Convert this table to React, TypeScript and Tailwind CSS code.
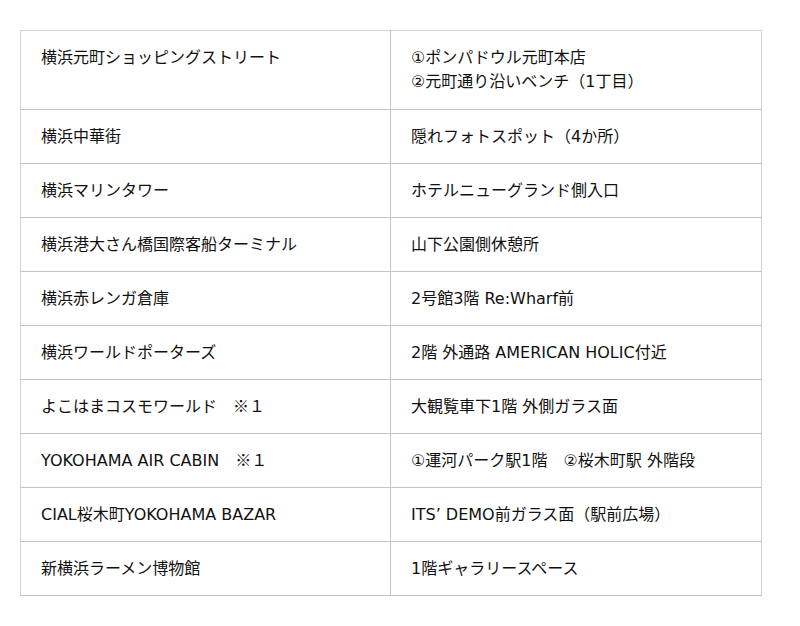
const rows: [string, string[]][] = [
  ["横浜元町ショッピングストリート", ["①ポンパドウル元町本店", "②元町通り沿いベンチ（1丁目）"]],
  ["横浜中華街", ["隠れフォトスポット（4か所）"]],
  ["横浜マリンタワー", ["ホテルニューグランド側入口"]],
  ["横浜港大さん橋国際客船ターミナル", ["山下公園側休憩所"]],
  ["横浜赤レンガ倉庫", ["2号館3階 Re:Wharf前"]],
  ["横浜ワールドポーターズ", ["2階 外通路 AMERICAN HOLIC付近"]],
  ["よこはまコスモワールド　※１", ["大観覧車下1階 外側ガラス面"]],
  ["YOKOHAMA AIR CABIN　※１", ["①運河パーク駅1階　②桜木町駅 外階段"]],
  ["CIAL桜木町YOKOHAMA BAZAR", ["ITS’ DEMO前ガラス面（駅前広場）"]],
  ["新横浜ラーメン博物館", ["1階ギャラリースペース"]],
];

// the "※１" note is set in the CJK font in the reference
function Label({ text }: { text: string }) {
  const idx = text.indexOf("※");
  if (idx < 0) return <>{text}</>;
  return (
    <>
      {text.slice(0, idx)}
      <span className="leading-none" style={{ fontFamily: '"Noto Sans CJK JP", sans-serif' }}>
        {text.slice(idx)}
      </span>
    </>
  );
}

export default function App() {
  return (
    <div
      className="w-[800px] h-[626px] bg-white px-5 pt-[30px] text-[#111] text-[16px] leading-[24px]"
      style={{ fontFamily: '"DejaVu Sans", "Noto Sans CJK JP", sans-serif' }}
    >
      <table className="w-[742px] border-collapse border border-[#d4d4d4]">
        <tbody>
          {rows.map(([place, spots], i) => (
            <tr key={i} className="border-b border-[#c4c4c4]">
              <td className="w-[370px] border-r border-[#c4c4c4] px-5 pt-[15px] pb-[14px] align-top">
                <div className="h-6">
                  <Label text={place} />
                </div>
              </td>
              <td
                className={"px-5 pt-[15px] align-top " + (i === 0 ? "pb-[15px]" : "pb-[14px]")}
              >
                {spots.map((s) => (
                  <div key={s} className="h-6">
                    {s}
                  </div>
                ))}
              </td>
            </tr>
          ))}
        </tbody>
      </table>
    </div>
  );
}
